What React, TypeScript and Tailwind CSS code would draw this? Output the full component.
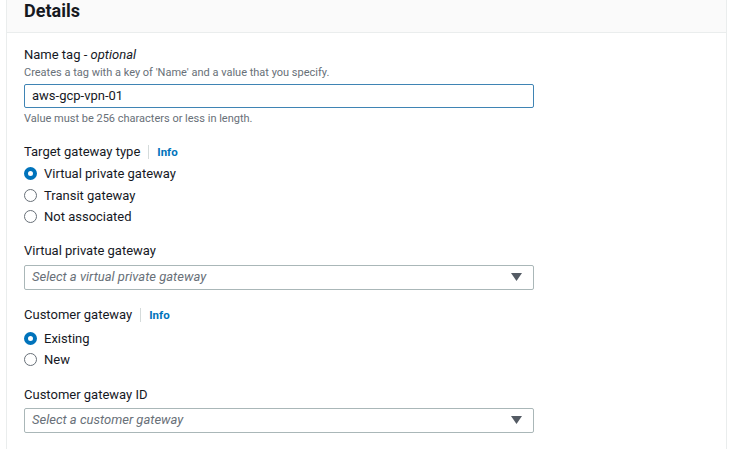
function Radio({ checked, label }: { checked?: boolean; label: string }) {
  return (
    <label className="flex items-center h-[21.5px]">
      {checked ? (
        <span className="w-[13px] h-[13px] rounded-full border-[4px] border-[#0073bb] bg-white" />
      ) : (
        <span className="w-[13px] h-[13px] rounded-full border border-[#687078] bg-white" />
      )}
      <span className="ml-[7px] text-[13px] text-[#16191f]">{label}</span>
    </label>
  );
}

function FieldLabel({ text, info }: { text: string; info?: boolean }) {
  return (
    <div className="flex items-center text-[13px] text-[#16191f] leading-[18px]">
      <span>{text}</span>
      {info && (
        <>
          <span className="mx-[8px] h-[14px] border-l border-[#d5dbdb]" />
          <span className="text-[11.5px] font-bold text-[#0073bb]">Info</span>
        </>
      )}
    </div>
  );
}

function Select({ placeholder, gap }: { placeholder: string; gap: string }) {
  return (
    <div className={`${gap} w-[510px] h-[25px] border border-[#aab7b8] rounded-[2px] flex items-center justify-between px-[7px]`}>
      <span className="text-[13px] italic text-[#687078]">{placeholder}</span>
      <svg width="11" height="8" viewBox="0 0 11 8" className="mr-[4px]">
        <path d="M0 0 H11 L5.5 8 Z" fill="#545b64" />
      </svg>
    </div>
  );
}

export default function App() {
  return (
    <div className="w-[730px] h-[449px] bg-white overflow-hidden" style={{ fontFamily: 'Roboto, "Liberation Sans", sans-serif' }}>
      <div className="ml-[6px] mr-[3px] h-full border-l border-r border-[#eaeded] bg-white">
        {/* Header */}
        <div className="h-[33px] bg-[#fafafa] border-b border-[#eaeded] px-[17px] flex items-start">
          <h2 className="text-[18px] font-bold text-[#16191f] leading-[22px]">Details</h2>
        </div>

        <div className="px-[17px] pt-[13px]">
          {/* Name tag */}
          <div className="text-[13px] text-[#16191f] leading-[18px]">
            Name tag - <span className="italic">optional</span>
          </div>
          <div className="text-[11px] text-[#687078] leading-[15px] mt-[1px]">
            Creates a tag with a key of 'Name' and a value that you specify.
          </div>
          <div className="mt-[4px] w-[510px] h-[24px] border-[1.5px] border-[#3f84b4] rounded-[2px] flex items-center px-[7px]">
            <span className="text-[13px] text-[#16191f]">aws-gcp-vpn-01</span>
          </div>
          <div className="text-[11px] text-[#687078] leading-[15px] mt-[3px]">
            Value must be 256 characters or less in length.
          </div>

          {/* Target gateway type */}
          <div className="mt-[17px]">
            <FieldLabel text="Target gateway type" info />
          </div>
          <div className="mt-[2px] flex flex-col">
            <Radio checked label="Virtual private gateway" />
            <Radio label="Transit gateway" />
            <Radio label="Not associated" />
          </div>

          {/* Virtual private gateway */}
          <div className="mt-[14px]">
            <FieldLabel text="Virtual private gateway" />
          </div>
          <Select placeholder="Select a virtual private gateway" gap="mt-[5px]" />

          {/* Customer gateway */}
          <div className="mt-[16px]">
            <FieldLabel text="Customer gateway" info />
          </div>
          <div className="mt-[4px] flex flex-col">
            <Radio checked label="Existing" />
            <Radio label="New" />
          </div>

          {/* Customer gateway ID */}
          <div className="mt-[15px]">
            <FieldLabel text="Customer gateway ID" />
          </div>
          <Select placeholder="Select a customer gateway" gap="mt-[4px]" />
        </div>
      </div>
    </div>
  );
}
